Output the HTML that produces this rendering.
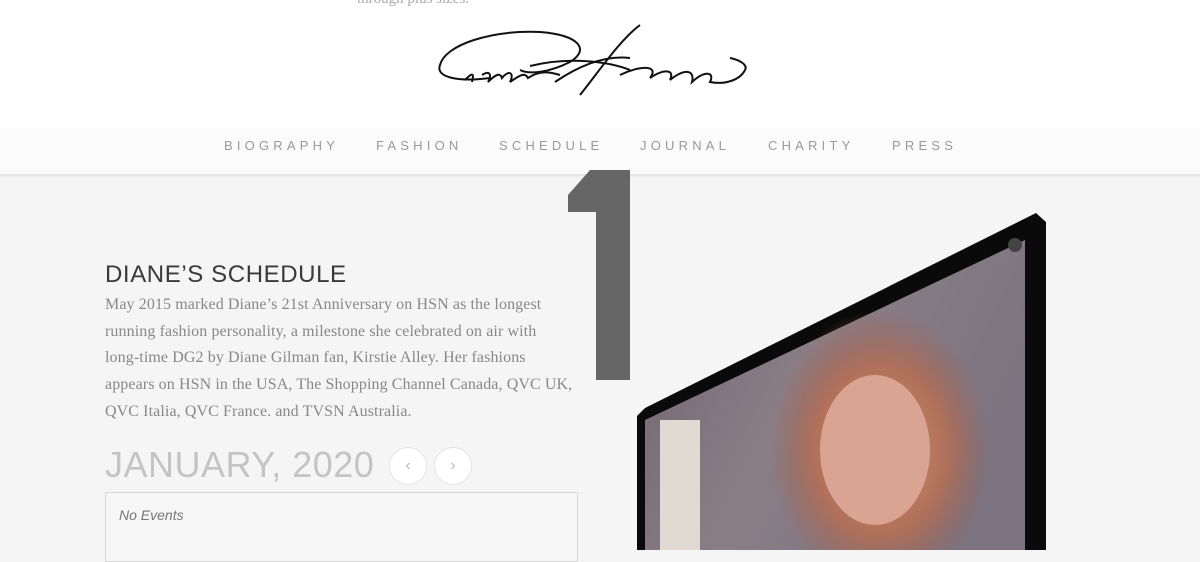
<!DOCTYPE html>
<html><head><meta charset="utf-8"><style>
*{margin:0;padding:0;box-sizing:border-box}
body{width:1200px;height:550px;overflow:hidden;background:#f5f5f5;position:relative;font-family:"Liberation Sans",sans-serif}
.hdr{position:absolute;left:0;top:0;width:1200px;height:128px;background:#fff}
.nav{position:absolute;left:0;top:128px;width:1200px;height:48px;background:#fbfbfb;border-bottom:2px solid #e6e6e6;box-shadow:0 1px 3px rgba(0,0,0,.05)}
.nav span{position:absolute;top:10px;font-size:13px;letter-spacing:4.2px;color:#9a9a9a}
.top{position:absolute;left:357px;top:-9px;font-family:"Liberation Serif",serif;font-size:15px;color:#aaa}
h1{position:absolute;left:105px;top:261px;font-weight:normal;font-size:24px;letter-spacing:.6px;color:#3a3a3a}
.p{position:absolute;left:105px;top:292px;white-space:nowrap;font-family:"Liberation Serif",serif;font-size:16px;letter-spacing:.1px;line-height:26.7px;color:#888}
.mon{position:absolute;left:105px;top:444px;font-size:36px;color:#c4c4c4;letter-spacing:.5px}
.btn{position:absolute;top:447px;width:38px;height:38px;border-radius:50%;background:#fff;border:1px solid #e4e4e4;color:#bbb;font-size:16px;text-align:center;line-height:36px}
.box{position:absolute;left:105px;top:492px;width:473px;height:70px;border:1px solid #d8d8d8;background:#f6f6f6}
.box i{position:absolute;left:13px;top:14px;font-size:14px;color:#777}
</style></head><body>
<div class="hdr"></div>
<div class="top">through plus sizes.</div>
<svg style="position:absolute;left:430px;top:20px" width="320" height="85" viewBox="0 0 320 85" fill="none" stroke="#111" stroke-width="2">
<path d="M60 58 C30 62 5 58 10 45 C15 25 60 10 110 12 C150 15 160 30 140 42 C120 52 100 55 90 50"/>
<path d="M35 60 C40 55 45 50 42 62 M52 55 C60 50 62 55 58 62 C65 55 70 52 72 58 C78 50 85 52 80 62 C90 55 95 52 98 58 C110 50 120 52 130 55"/>
<path d="M125 62 C150 45 175 35 200 38 M150 75 C170 50 190 20 210 5 M190 55 C210 45 230 45 220 58 C235 48 245 50 240 60 C255 48 265 50 262 62 C275 50 285 52 280 62 C295 65 310 60 315 50 C318 45 310 40 300 38"/>
<path d="M100 46 C140 36 180 42 200 50"/>
</svg>
<div class="nav">
<span style="left:224px">BIOGRAPHY</span><span style="left:376px">FASHION</span><span style="left:499px">SCHEDULE</span><span style="left:640px">JOURNAL</span><span style="left:768px">CHARITY</span><span style="left:892px">PRESS</span>
</div>
<svg style="position:absolute;left:0;top:0" width="1200" height="550">
<polygon points="590,170 630,170 630,380 596,380 596,212 568,212 568,195" fill="#666"/>
<defs><linearGradient id="g" x1="0" y1="0" x2="1" y2="0.4"><stop offset="0" stop-color="#6e6470"/><stop offset=".5" stop-color="#8a7e86"/><stop offset="1" stop-color="#7c7480"/></linearGradient>
<radialGradient id="h" cx="0.5" cy="0.5" r="0.5"><stop offset="0" stop-color="#d09078"/><stop offset=".6" stop-color="#b0705a"/><stop offset="1" stop-color="#a06050" stop-opacity="0"/></radialGradient></defs>
<polygon points="645,408 1036,213 1046,222 1046,550 637,550 637,416" fill="#0a0a0a"/>
<polygon points="645,420 1025,240 1025,550 645,550" fill="url(#g)"/>
<ellipse cx="880" cy="450" rx="110" ry="140" fill="url(#h)"/>
<ellipse cx="875" cy="450" rx="55" ry="75" fill="#d9a592"/>
<rect x="660" y="420" width="40" height="130" fill="#e0dad2"/>
<circle cx="1015" cy="245" r="7" fill="#444"/>
</svg>
<h1>DIANE’S SCHEDULE</h1>
<div class="p">May 2015 marked Diane’s 21st Anniversary on HSN as the longest<br>running fashion personality, a milestone she celebrated on air with<br>long-time DG2 by Diane Gilman fan, Kirstie Alley. Her fashions<br>appears on HSN in the USA, The Shopping Channel Canada, QVC UK,<br>QVC Italia, QVC France. and TVSN Australia.</div>
<div class="mon">JANUARY, 2020</div>
<div class="btn" style="left:389px">‹</div>
<div class="btn" style="left:434px">›</div>
<div class="box"><i>No Events</i></div>
</body></html>
